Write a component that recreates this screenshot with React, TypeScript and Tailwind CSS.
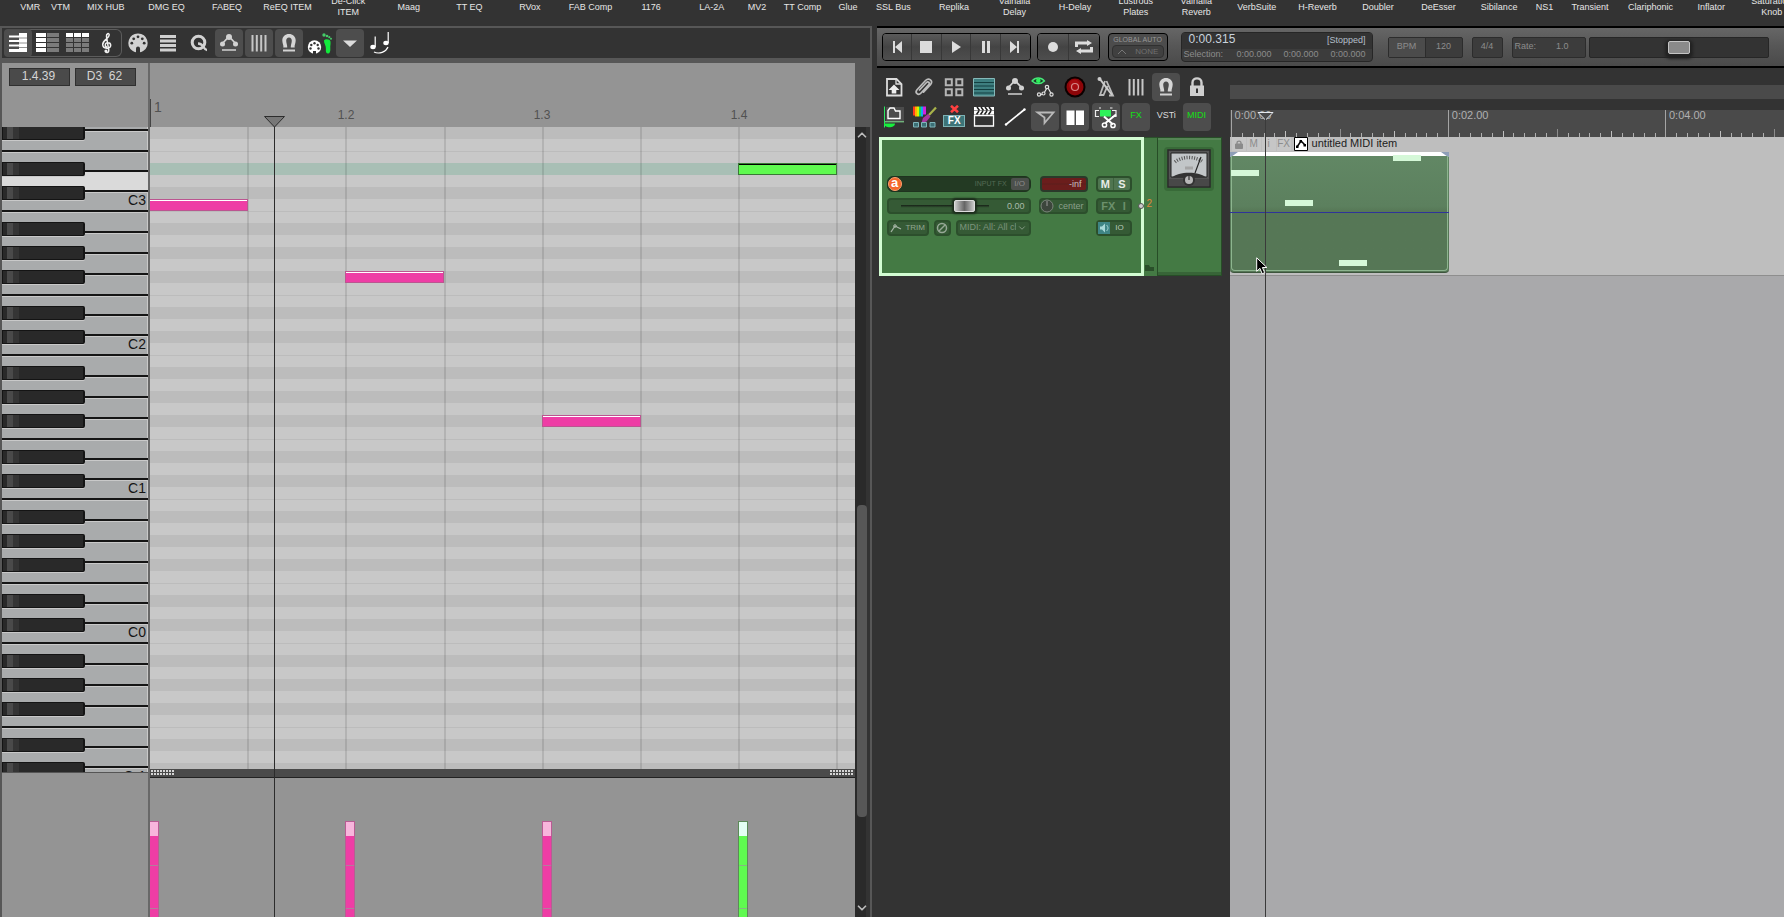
import * as React from "react";
import { ChevronDown, ChevronUp } from "lucide-react";
import clsx from "clsx";

const BEAT = 196.4;
const SECOND = 108.6;

const fxShortcuts = [
  { name: "VMR", small: true },
  { name: "VTM", small: true },
  { name: "MIX HUB" },
  { name: "DMG EQ" },
  { name: "FABEQ" },
  { name: "ReEQ ITEM" },
  { name: "De-Click ITEM" },
  { name: "Maag" },
  { name: "TT EQ" },
  { name: "RVox" },
  { name: "FAB Comp" },
  { name: "1176" },
  { name: "LA-2A" },
  { name: "MV2", small: true },
  { name: "TT Comp" },
  { name: "Glue", small: true },
  { name: "SSL Bus" },
  { name: "Replika" },
  { name: "Valhalla Delay" },
  { name: "H-Delay" },
  { name: "Lustrous Plates" },
  { name: "Valhalla Reverb" },
  { name: "VerbSuite" },
  { name: "H-Reverb" },
  { name: "Doubler" },
  { name: "DeEsser" },
  { name: "Sibilance" },
  { name: "NS1", small: true },
  { name: "Transient" },
  { name: "Clariphonic" },
  { name: "Inflator" },
  { name: "Saturation Knob" },
];

const octaves = [3, 2, 1, 0, -1];
const whiteKeys = ["B", "A", "G", "F", "E", "D", "C"];
// semitone rows counted down from B
const blackRows = [1, 3, 5, 8, 10];
const semitones = [0, 1, 2, 3, 4, 5, 6, 7, 8, 9, 10, 11];

// row is counted from the top of octave 3
const notes = [
  { beat: 0, row: 11, selected: false },
  { beat: 1, row: 17, selected: false },
  { beat: 2, row: 29, selected: false },
  { beat: 3, row: 8, selected: true },
];

/* ---------- icons ---------- */

const Svg = ({
  children,
  size = 28,
}: {
  children: React.ReactNode;
  size?: number;
}) => (
  <svg
    width={size}
    height={size}
    viewBox="0 0 28 28"
    fill="none"
    className="shrink-0"
  >
    {children}
  </svg>
);

const PianoIcon = () => (
  <Svg>
    <path
      d="M15 4h8v19H15zM5 6.500h10v2H5zM5 11h10v2H5zM5 15.500h10v2H5zM5 20h10v3H5z"
      fill="#fff"
    />
    <path d="M15 9h8M15 14h8M15 18.500h8" stroke="#777" strokeWidth=".8" />
  </Svg>
);

const NamedNotesIcon = () => (
  <Svg>
    <path d="M2 4h10v4H2zM2 9h10v4H2zM2 14h10v4H2zM2 19h10v4H2z" fill="#fff" />
    <path
      d="M13 4h12v4H13zM13 9h12v4H13zM13 14h12v4H13zM13 19h12v4H13z"
      fill="#7b7b7b"
    />
  </Svg>
);

const EventListIcon = () => (
  <Svg>
    {[2, 10, 18].map((x) => (
      <g key={x}>
        <path d={`M${x} 4h7v4h-7z`} fill="#fff" />
        <path d={`M${x} 9h7v4h-7zM${x} 14h7v4h-7zM${x} 19h7v4h-7z`} fill="#7b7b7b" />
      </g>
    ))}
  </Svg>
);

const ClefIcon = () => (
  <Svg>
    <path
      d="M11.500 21.500c-.8 2.800 4 2.600 3.200-.5L12.500 7.500c-.4-3 2.700-4 2.700-1.500 0 3.500-6.500 5-6.500 9.500 0 4.600 8 4.900 8 .8 0-3.600-5.600-3.400-5.400-.2 0 1.500 1 2 1.800 2"
      stroke="#f0f0f0"
      strokeWidth="1.500"
    />
    <circle cx="12" cy="22" r="1.500" fill="#f0f0f0" />
  </Svg>
);

const DinIcon = () => (
  <Svg>
    <path
      d="M14 4.500a9.500 9.500 0 0 1 5.500 17.300c-1.200 1-2 1.200-3.500 1.500v-3.800a2 2 0 0 0-4 0v3.800c-1.500-.3-2.300-.5-3.500-1.500A9.500 9.500 0 0 1 14 4.500z"
      fill="#d2d2d2"
    />
    <g fill="#333">
      <circle cx="14" cy="7.800" r="1.400" />
      <circle cx="9.700" cy="9.800" r="1.400" />
      <circle cx="18.300" cy="9.800" r="1.400" />
      <circle cx="7.800" cy="14.200" r="1.400" />
      <circle cx="20.200" cy="14.200" r="1.400" />
    </g>
  </Svg>
);

const RowsIcon = () => (
  <Svg>
    <path d="M6 6h16v3H6zM6 10.500h16v3H6zM6 15h16v3H6zM6 19.500h16v3H6z" fill="#d0d0d0" />
  </Svg>
);

const QuantizeIcon = () => (
  <Svg>
    <circle cx="13.500" cy="13.500" r="6.300" stroke="#d2d2d2" strokeWidth="3" />
    <path d="M13 14.500c3 0 4 1 5.500 3.500s2 3 3.500 3" stroke="#d2d2d2" strokeWidth="2.400" />
  </Svg>
);

const EnvelopeIcon = () => (
  <Svg>
    <path d="M6 16L14 7.500l8 8.500" stroke="#d2d2d2" strokeWidth="1.800" />
    <circle cx="14" cy="8" r="3" fill="#d2d2d2" />
    <circle cx="7.500" cy="15" r="2.500" fill="#d2d2d2" />
    <circle cx="20.500" cy="15" r="2.500" fill="#d2d2d2" />
    <path d="M7 21h14" stroke="#d2d2d2" strokeWidth="1.500" />
  </Svg>
);

const GridIcon = () => (
  <Svg>
    <path
      d="M7.500 6v16.500M11.800 6v16.500M16.200 6v16.500M20.500 6v16.500"
      stroke="#c6c6c6"
      strokeWidth="2"
    />
  </Svg>
);

const MagnetIcon = () => (
  <Svg>
    <path
      d="M12.200 18.500H8.300c.6-2-1-4-1-7C7.300 7.500 10.300 5 14 5s6.700 2.500 6.700 6.500c0 3-1.600 5-1 7h-3.900c-.3-2 1-4.200 1-6.700 0-2-1-3.300-2.800-3.300s-2.800 1.300-2.800 3.300c0 2.500 1.300 4.700 1 6.700z"
      fill="#d6d6d6"
    />
    <path d="M8 21.500h12" stroke="#d2d2d2" strokeWidth="2" />
  </Svg>
);

const StepInputIcon = () => (
  <Svg>
    <circle cx="8.500" cy="18" r="6.700" fill="#fff" />
    <path d="M7 26v-4h3v4z" fill="#333" />
    <g fill="#333">
      <circle cx="8.500" cy="14.300" r="1.200" />
      <circle cx="5.300" cy="16" r="1.200" />
      <circle cx="11.700" cy="16" r="1.200" />
      <circle cx="4.500" cy="19.500" r="1.200" />
      <circle cx="12.500" cy="19.500" r="1.200" />
    </g>
    <path
      d="M18 11.500c1-1.800 6-1.800 6.500 1 .3 3-.4 4-.2 6.500.3 3.500-.5 5.500-2.200 5.500-2 0-2.500-2-2.200-4.500.4-3-2.200-6-1.900-8.500z"
      fill="#12ea3c"
    />
    <g fill="#45c968">
      <circle cx="18" cy="6" r="1.700" />
      <circle cx="21" cy="7" r="1.300" />
      <circle cx="23.300" cy="8.200" r="1.100" />
      <circle cx="25" cy="9.800" r="1" />
    </g>
  </Svg>
);

const DropIcon = () => (
  <Svg>
    <path d="M7 11.500h14L14 18z" fill="#dcdcdc" />
  </Svg>
);

const NotesIcon = () => (
  <Svg>
    <ellipse cx="7" cy="18" rx="2.700" ry="2.200" fill="#fff" />
    <ellipse cx="20" cy="14" rx="2.700" ry="2.200" fill="#fff" />
    <path
      d="M9.200 18V7.500M22.200 14V3M8 23c5 2.500 12 0 14-5"
      stroke="#fff"
      strokeWidth="1.200"
    />
  </Svg>
);

const SaveIcon = () => (
  <Svg>
    <path d="M7 6h9.500l5 5v11.500H7z" stroke="#ddd" strokeWidth="1.800" />
    <path d="M16 6v5h5" stroke="#ddd" strokeWidth="1.300" />
    <path d="M14 11.500l5.500 5.500h-3.200v3.500h-4.600V17H8.500z" fill="#eee" />
  </Svg>
);

const ClipIcon = () => (
  <Svg>
    <path
      d="M9.500 17l7-7.500c1.500-1.600 3.800.3 2.300 2L11 20c-2.800 3-6.500-.3-4-3.300L15.500 7.500c3.500-3.500 8 .5 5 4.200l-7 7.500"
      stroke="#bdbdbd"
      strokeWidth="1.700"
      strokeLinecap="round"
    />
  </Svg>
);

const BlocksIcon = () => (
  <Svg>
    <path
      d="M5.800 6.300h6v6h-6zM16.300 6.300h6v6h-6zM5.800 16.300h6v6h-6zM16.300 16.300h6v6h-6z"
      stroke="#b5b5b5"
      strokeWidth="2"
    />
  </Svg>
);

const RippleIcon = () => (
  <Svg>
    <path d="M3.500 5.500h21v17.500h-21z" fill="#3e7f80" stroke="#85b9b9" />
    <path d="M4 9.500h20M4 13h20M4 16.500h20M4 20h20" stroke="#133f40" strokeWidth="1.200" />
  </Svg>
);

const EnvViewIcon = () => (
  <Svg>
    <path
      d="M1 8C4.500 4 10 4 13.500 8c-3.500 3.500-9 3.500-12.500 0z"
      fill="#1c3a26"
      stroke="#46e878"
      strokeWidth="1.300"
    />
    <circle cx="7.300" cy="7.800" r="2.300" fill="#2cf25a" />
    <path d="M8.500 22l4-1 4-7 4.500 8" stroke="#ddd" strokeWidth="1.300" />
    <g fill="#333" stroke="#ddd" strokeWidth="1.200">
      <circle cx="8" cy="21.500" r="1.600" />
      <circle cx="12.500" cy="20.500" r="1.500" />
      <circle cx="16" cy="14" r="1.700" />
      <circle cx="20.500" cy="21.500" r="1.600" />
    </g>
  </Svg>
);

const RecordIcon = () => (
  <Svg>
    <circle cx="14" cy="14" r="10.500" fill="#0c0000" />
    <circle cx="14" cy="14" r="8.500" fill="#8d0508" />
    <circle cx="13.500" cy="12" r="5.500" fill="#a80b10" />
    <circle cx="14" cy="14" r="3.500" stroke="#d58888" strokeWidth="1.200" />
  </Svg>
);

const MetronomeIcon = () => (
  <Svg>
    <path d="M13 8l-5 14h3.500l4-9M14.500 8l6.500 14.500h-4" stroke="#bbb" strokeWidth="1.800" />
    <path d="M7.500 5.500L20 22" stroke="#ccc" strokeWidth="2" />
    <circle cx="7.500" cy="6" r="2" fill="#ccc" />
  </Svg>
);

const LockIcon = () => (
  <Svg>
    <path d="M9.500 13V9.500c0-5.500 9-5.500 9 0V13" stroke="#cfcfcf" strokeWidth="2.400" />
    <path d="M7 12.500h14v10.500H7z" fill="#cfcfcf" />
    <path d="M13 15.500h2v4.500h-2z" fill="#333" />
  </Svg>
);

const FolderIcon = () => (
  <Svg>
    <path d="M4.500 4.500v21" stroke="#2be860" strokeWidth="1" />
    <path d="M6 5h18v14H6z" fill="#4c4c4c" />
    <path d="M5 19.800h19" stroke="#8be89b" />
    <path d="M4 21.500h11c0 5-11 5-11 0z" fill="#17ef3d" />
    <path
      d="M8 16.500v-8l2-2.500h4l1.500 3h4.500v7.500z"
      stroke="#fff"
      strokeWidth="1.400"
    />
  </Svg>
);

const PaintIcon = () => (
  <Svg>
    <path d="M3 4.500h2v9H3z" fill="#ff3b1f" />
    <path d="M5 4.500h2v10H5z" fill="#ffb000" />
    <path d="M7 4.500h2v10H7z" fill="#d7f000" />
    <path d="M9 4.500h2v10H9z" fill="#12d65a" />
    <path d="M11 4.500h2v10h-2z" fill="#16a8ef" />
    <path d="M13 4.500h3v8h-3z" fill="#d022e0" />
    <path d="M26 5.500L19 13" stroke="#a8b34a" strokeWidth="2.200" />
    <path d="M18 12l2.500 2.500-4 5-5 1.500 1.500-5z" fill="#a8379f" />
    <path
      d="M3.500 20.500h5v4.500h-5zM11.500 20.500h5v4.500h-5zM20 20.500h5v4.500h-5z"
      fill="#3b6f75"
      stroke="#7fb5ba"
    />
  </Svg>
);

const FxOfflineIcon = () => (
  <span className="flex flex-col items-center gap-0.5">
    <svg width="9" height="8" viewBox="0 0 9 8">
      <path d="M1 .8L8 7.200M8 .8L1 7.200" stroke="#ff4040" strokeWidth="2.600" />
    </svg>
    <span className="w-[22px] h-[12px] bg-[#3d7478] border border-[#7db3b5] text-white text-[10px] leading-[10px] font-bold text-center">
      FX
    </span>
  </span>
);

const ClapIcon = () => (
  <Svg>
    <path d="M4.500 13.500h19V24h-19z" stroke="#fff" strokeWidth="1.300" />
    <path d="M4 5h20v3.500H4zM4 9h20v3.500H4z" fill="#fff" />
    <path
      d="M7 5l2.500 3.500M11 5l2.500 3.500M15 5l2.500 3.500M19 5l2.500 3.500M9 9l-2.500 3.500M13 9l-2.500 3.500M17 9l-2.500 3.500M21 9l-2.500 3.500"
      stroke="#222"
      strokeWidth="1.500"
    />
  </Svg>
);

const LineIcon = () => (
  <Svg>
    <path d="M5 22.500L23.500 7.500" stroke="#fff" strokeWidth="1.700" />
    <circle cx="5" cy="22.500" r="1.200" fill="#fff" />
    <circle cx="23.500" cy="7.500" r="1.200" fill="#fff" />
  </Svg>
);

const ArrowIcon = () => (
  <Svg>
    <path d="M6.500 10.500h16L13.500 21v-5.500z" stroke="#b9b9b9" strokeWidth="1.800" />
  </Svg>
);

const ItemsIcon = () => (
  <Svg>
    <path d="M5.500 8.500h8V23h-8zM15 8.500h8V23h-8z" fill="#fff" />
  </Svg>
);

const SplitIcon = () => (
  <Svg>
    <path d="M8 8h11v6.500H8z" fill="#2ef25a" />
    <path
      d="M7 8.500H3.500v6H7M20 8.500h4v6h-4M7 6h2M18 6h2.500"
      stroke="#eee"
      strokeWidth="1.200"
    />
    <path d="M24 12.500L13.500 21M12 14.500l9 8" stroke="#fff" strokeWidth="2" />
    <circle cx="12.500" cy="23" r="2.100" stroke="#fff" strokeWidth="1.500" />
    <circle cx="21" cy="23.500" r="2.100" stroke="#fff" strokeWidth="1.500" />
  </Svg>
);

/* ---------- shared pieces ---------- */

interface ToolButtonProps {
  label: string;
  active?: boolean;
  children: React.ReactNode;
}

const ToolButton = ({ label, active, children }: ToolButtonProps) => (
  <button
    type="button"
    aria-label={label}
    className={clsx(
      "w-7 h-7 shrink-0 flex items-center justify-center rounded-sm",
      active && "bg-[#4d4d4d]",
    )}
  >
    {children}
  </button>
);

const Grip = () => (
  <svg width="24" height="6" className="mx-px">
    {[0, 1, 2, 3, 4, 5, 6, 7].map((i) => (
      <path key={i} d={`M${i * 3} 0h2v2h-2zM${i * 3} 3h2v2h-2z`} fill="#d5d5d5" />
    ))}
  </svg>
);

/* ---------- plugin shortcuts ---------- */

const ShortcutBar = () => (
  <nav className="h-[26px] shrink-0 flex items-start ml-[15px] -mr-[18px] text-[#e6e6e6] text-[9px] leading-[11px]">
    {fxShortcuts.map((fx) => (
      <button
        key={fx.name}
        type="button"
        className={clsx(
          "h-[14px] min-w-0 flex items-center justify-center",
          fx.small ? "flex-1" : "flex-2",
        )}
      >
        <span
          className={clsx(
            "text-center",
            /De-Click|Valhalla|Lustrous|Saturation/.test(fx.name)
              ? "w-11"
              : "whitespace-nowrap",
          )}
        >
          {fx.name}
        </span>
      </button>
    ))}
  </nav>
);

/* ---------- MIDI editor ---------- */

const MidiToolbar = () => (
  <div className="h-[30px] shrink-0 bg-[#333] flex items-center pl-0.5">
    <div className="flex gap-0.5 rounded-md ring-1 ring-inset ring-[#5c5c5c]">
      <ToolButton label="Piano roll" active>
        <PianoIcon />
      </ToolButton>
      <ToolButton label="Named notes">
        <NamedNotesIcon />
      </ToolButton>
      <ToolButton label="Event list">
        <EventListIcon />
      </ToolButton>
      <ToolButton label="Notation">
        <ClefIcon />
      </ToolButton>
    </div>
    <div className="ml-0.5 w-[270px] flex justify-between">
      <ToolButton label="MIDI filter">
        <DinIcon />
      </ToolButton>
      <ToolButton label="Event rows">
        <RowsIcon />
      </ToolButton>
      <ToolButton label="Quantize">
        <QuantizeIcon />
      </ToolButton>
      <ToolButton label="Envelope" active>
        <EnvelopeIcon />
      </ToolButton>
      <ToolButton label="Grid" active>
        <GridIcon />
      </ToolButton>
      <ToolButton label="Snap" active>
        <MagnetIcon />
      </ToolButton>
      <ToolButton label="Step input">
        <StepInputIcon />
      </ToolButton>
      <ToolButton label="More" active>
        <DropIcon />
      </ToolButton>
      <ToolButton label="Note length">
        <NotesIcon />
      </ToolButton>
    </div>
  </div>
);

const Keyboard = () => (
  <div className="flex-1 min-h-0 overflow-hidden bg-[#a9abac]">
    <div className="-mt-[59px]">
      {octaves.map((oct) => (
        <div key={oct} className="relative">
          {whiteKeys.map((key, i) => (
            <div
              key={key}
              className={clsx(
                "border-b-2 border-[#151515] flex items-center justify-end pr-0.5 pb-0.5 text-sm leading-4 text-[#151515]",
                i < 4 ? "h-[21px]" : "h-5",
                oct === 3 && key === "D"
                  ? "bg-[#dadada]"
                  : "bg-[#a9abac] shadow-[inset_-1px_1px_0_#c9c9c9]",
              )}
            >
              {key === "C" && `C${oct}`}
            </div>
          ))}
          {blackRows.map((row) => (
            <div
              key={row}
              className="absolute left-0 w-[83px] h-[14px] border border-[#141414] border-r-2 rounded-r-xs bg-[#292929] shadow-[0_1px_0_#c9c9c9]"
              style={{ top: row * 12 - 2 }}
            >
              <div className="ml-1 h-full w-3 bg-linear-to-r from-[#4a4a4a] from-50% to-[#353535] to-50%" />
            </div>
          ))}
        </div>
      ))}
    </div>
  </div>
);

const Ruler = () => (
  <div className="relative h-16 shrink-0 bg-[#949494] text-[#515151]">
    <div className="absolute left-0 bottom-0 h-7 w-px bg-[#444]" />
    <span className="absolute left-1 top-9 text-sm leading-4">1</span>
    {[1, 2, 3].map((b) => (
      <span
        key={b}
        className="absolute top-11 text-xs leading-4 -translate-x-1/2"
        style={{ left: Math.floor(b * BEAT) }}
      >
        1.{b + 1}
      </span>
    ))}
  </div>
);

const PianoRoll = () => (
  <div className="relative flex-1 min-h-0 overflow-hidden bg-[#c8c8c8]">
    <div className="relative -mt-[60px]">
      {octaves.map((oct) =>
        semitones.map((s) => (
          <div
            key={`${oct}-${s}`}
            className={clsx(
              "h-3",
              oct === 3 && s === 8
                ? "bg-[#a8bfb5]"
                : blackRows.includes(s)
                  ? "bg-[#bcbcbc]"
                  : "bg-[#c8c8c8]",
              (s === 0 || s === 7) && "border-t border-[#bcbcbc]",
            )}
          />
        )),
      )}
      {[1, 2, 3, 4, 5, 6, 7].map((i) => (
        <div
          key={i}
          className="absolute inset-y-0 w-0.5 bg-black/10"
          style={{ left: Math.round((i * BEAT) / 2) - 1 }}
        />
      ))}
      {notes.map((n) => (
        <div
          key={n.beat}
          className={clsx(
            "absolute h-3 border",
            n.selected
              ? "bg-[#5ffa50] border-[#3a7a36] shadow-[inset_0_1px_0_#000]"
              : "bg-[#ee3da5] border-[#bb5590] shadow-[inset_0_1px_0_#fff]",
          )}
          style={{
            left: Math.round(n.beat * BEAT) - 1,
            top: n.row * 12,
            width: Math.round(BEAT / 2) + 1,
          }}
        />
      ))}
    </div>
  </div>
);

const VelocityLane = () => (
  <div className="relative h-[139px] shrink-0 overflow-hidden bg-[#949494]">
    {notes.map((n) => (
      <div
        key={n.beat}
        className={clsx(
          "absolute bottom-0 w-[10px] h-24 border border-b-0",
          n.selected ? "bg-[#5ffa50] border-[#5c8a58]" : "bg-[#ee3da5] border-[#b85c93]",
        )}
        style={{ left: Math.round(n.beat * BEAT) - 1 }}
      >
        <div className={clsx("h-[14px]", n.selected ? "bg-[#e4fff4]" : "bg-[#f8b5dc]")} />
        <div className="mt-[29px] h-px bg-[#999]/70" />
        <div className="mt-[42px] h-px bg-[#999]/70" />
      </div>
    ))}
  </div>
);

const MidiEditor = () => (
  <section className="flex-[872] min-w-0 flex flex-col bg-[#575757] pt-0.5 px-0.5">
    <MidiToolbar />
    <div className="mt-[5px] flex-1 min-h-0 flex">
      <div className="w-[146px] shrink-0 flex flex-col">
        <div className="h-16 shrink-0 bg-[#949494] flex items-start gap-[5px] pt-[5px] pl-[7px] text-xs text-[#d5d5d5]">
          <div className="w-[61px] h-[18px] leading-[15px] pr-0.5 text-center bg-[#4a4a4a] border border-[#2f2f2f]">
            1.4.39
          </div>
          <div className="w-[61px] h-[18px] leading-[15px] pr-0.5 text-center whitespace-pre bg-[#4a4a4a] border border-[#2f2f2f]">
            {"D3  62"}
          </div>
        </div>
        <Keyboard />
        <div className="h-[145px] shrink-0 bg-[#949494] border-t border-[#555]" />
      </div>

      <div className="relative flex-1 min-w-0 overflow-hidden flex flex-col border-l-2 border-[#686868]">
        <Ruler />
        <PianoRoll />
        <div className="h-[9px] shrink-0 bg-[#4a4a4a] border-b border-[#222] flex items-center justify-between">
          <Grip />
          <Grip />
        </div>
        <VelocityLane />
        {/* edit cursor */}
        <div className="absolute left-[124px] top-16 bottom-0 w-px bg-[#2c2c2c]" />
        <svg width="22" height="12" className="absolute left-[114px] top-[53px]">
          <path d="M.5 .5h20L10.500 11z" fill="#777" stroke="#2c2c2c" />
        </svg>
      </div>

      <div className="w-[15px] shrink-0 mt-16 bg-[#2a2a2a] border-r-4 border-[#333] flex flex-col items-center text-[#bbb]">
        <ChevronUp size={14} strokeWidth={3} className="shrink-0 mt-px -mr-1" />
        <div className="flex-[362]" />
        <div className="flex-[310] w-[10px] -mr-1 rounded-sm bg-[#575757]" />
        <div className="flex-[84]" />
        <ChevronDown size={14} strokeWidth={3} className="shrink-0 mb-0.5 -mr-1" />
      </div>
    </div>
  </section>
);

/* ---------- transport ---------- */

const TransportButton = ({
  label,
  children,
}: {
  label: string;
  children: React.ReactNode;
}) => (
  <button
    type="button"
    aria-label={label}
    className="flex-1 flex items-center justify-center bg-linear-to-b from-[#5a5a5a] via-[#444] to-[#4e4e4e] border-r border-[#383838] last:border-r-0"
  >
    <svg width="18" height="14" viewBox="0 0 18 14" fill="#dcdcdc">
      {children}
    </svg>
  </button>
);

const Transport = () => (
  <div className="h-[42px] shrink-0 overflow-hidden border-y-2 border-black bg-linear-to-b from-[#666] via-[#565656] to-[#4a4a4a] flex items-center pl-[5px] text-[9px] text-[#8c8c8c]">
    <div className="w-[149px] h-7 shrink-0 flex rounded-sm overflow-hidden border border-black">
      <TransportButton label="Go to start">
        <path d="M5 1h2v12H5zM14 1v12L7 7z" />
      </TransportButton>
      <TransportButton label="Stop">
        <path d="M3 1h12v12H3z" />
      </TransportButton>
      <TransportButton label="Play">
        <path d="M5 1l9 6-9 6z" />
      </TransportButton>
      <TransportButton label="Pause">
        <path d="M5 1h3v12H5zM10 1h3v12h-3z" />
      </TransportButton>
      <TransportButton label="Go to end">
        <path d="M11 1h2v12h-2zM4 1v12l7-6z" />
      </TransportButton>
    </div>
    <div className="ml-1.5 w-[63px] h-7 shrink-0 flex rounded-sm overflow-hidden border border-black">
      <TransportButton label="Record">
        <circle cx="9" cy="7" r="5" />
      </TransportButton>
      <TransportButton label="Repeat">
        <path d="M0 1.500h12V0l5 3-5 3V4.500H3V7H0zM18 12.500H6V14l-5-3 5-3v1.500h9V7h3z" />
      </TransportButton>
    </div>
    <div className="ml-2 w-[60px] h-7 shrink-0 rounded-sm border border-black bg-[#4c4c4c] text-[8px] leading-[11px] text-center">
      <div className="text-[#989898] text-[7px] whitespace-nowrap">GLOBAL AUTO</div>
      <div className="mx-[3px] h-[13px] rounded-sm border border-[#303030] bg-[#404040] flex items-center justify-around">
        <svg width="10" height="7">
          <path d="M1 6l4-4 4 4" stroke="#777" fill="none" />
        </svg>
        <span className="text-[#707070]">NONE</span>
      </div>
    </div>
    <div className="ml-[13px] w-[192px] h-[30px] shrink-0 rounded-sm border border-[#262626] bg-[#3c3c3c]">
      <div className="h-4 flex items-start justify-between pl-[7px] pr-1.5 bg-[#333]">
        <span className="text-xs leading-[13px] text-[#c9d2dc]">0:00.315</span>
        <span className="leading-[15px] text-[#b4bfca]">[Stopped]</span>
      </div>
      <div className="h-3 flex items-start gap-3 pl-0.5 leading-[10px]">
        <span className="mr-auto">Selection:</span>
        <span>0:00.000</span>
        <span>0:00.000</span>
        <span className="mr-1.5">0:00.000</span>
      </div>
    </div>
    <div className="ml-[15px] w-[75px] h-[21px] shrink-0 leading-[17px] flex rounded-xs border border-[#2c2c2c] bg-[#3c3c3c] text-center">
      <span className="flex-1 bg-[#4b4b4b] border-r border-[#2c2c2c]">BPM</span>
      <span className="flex-1">120</span>
    </div>
    <div className="ml-[9px] w-[31px] h-[21px] shrink-0 leading-[17px] rounded-xs border border-[#2c2c2c] bg-[#3c3c3c] text-center">
      4/4
    </div>
    <label
      htmlFor="rate"
      className="ml-[9px] w-[74px] h-[21px] shrink-0 leading-[17px] rounded-xs border border-[#2c2c2c] bg-[#3c3c3c] flex justify-between pl-0.5 pr-4"
    >
      <span>Rate:</span>
      <span>1.0</span>
    </label>
    <input
      id="rate"
      type="range"
      defaultValue={50}
      className="ml-[3px] mr-[15px] min-w-0 flex-1 h-[21px] appearance-none rounded-xs border border-[#262626] bg-[#333] [&::-webkit-slider-thumb]:appearance-none [&::-webkit-slider-thumb]:w-[22px] [&::-webkit-slider-thumb]:h-[13px] [&::-webkit-slider-thumb]:rounded-xs [&::-webkit-slider-thumb]:border [&::-webkit-slider-thumb]:border-[#c4c4c4] [&::-webkit-slider-thumb]:bg-[#8a8a8a] [&::-webkit-slider-thumb]:shadow-[0_2px_3px_3px_#222]"
    />
  </div>
);

/* ---------- track panel ---------- */

const MainToolbar = () => (
  <div className="ml-[3px] mt-[5px] w-[331px] flex flex-col gap-0.5 text-[9px]">
    <div className="flex justify-between">
      <ToolButton label="Save project">
        <SaveIcon />
      </ToolButton>
      <ToolButton label="Attach">
        <ClipIcon />
      </ToolButton>
      <ToolButton label="Group items">
        <BlocksIcon />
      </ToolButton>
      <ToolButton label="Ripple edit">
        <RippleIcon />
      </ToolButton>
      <ToolButton label="Move envelopes">
        <EnvelopeIcon />
      </ToolButton>
      <ToolButton label="Show envelopes">
        <EnvViewIcon />
      </ToolButton>
      <ToolButton label="Arm">
        <RecordIcon />
      </ToolButton>
      <ToolButton label="Metronome">
        <MetronomeIcon />
      </ToolButton>
      <ToolButton label="Grid lines">
        <GridIcon />
      </ToolButton>
      <ToolButton label="Snap to grid" active>
        <MagnetIcon />
      </ToolButton>
      <ToolButton label="Lock">
        <LockIcon />
      </ToolButton>
    </div>
    <div className="flex justify-between [&>button]:pb-0.5">
      <ToolButton label="Track folder">
        <FolderIcon />
      </ToolButton>
      <ToolButton label="Colors">
        <PaintIcon />
      </ToolButton>
      <ToolButton label="Remove FX">
        <FxOfflineIcon />
      </ToolButton>
      <ToolButton label="Actions">
        <ClapIcon />
      </ToolButton>
      <ToolButton label="Draw line">
        <LineIcon />
      </ToolButton>
      <ToolButton label="Pointer" active>
        <ArrowIcon />
      </ToolButton>
      <ToolButton label="Items" active>
        <ItemsIcon />
      </ToolButton>
      <ToolButton label="Split item" active>
        <SplitIcon />
      </ToolButton>
      <ToolButton label="FX" active>
        <span className="text-[#14e014]">FX</span>
      </ToolButton>
      <ToolButton label="VSTi">
        <span className="text-[#dcdcdc]">VSTi</span>
      </ToolButton>
      <ToolButton label="MIDI" active>
        <span className="text-[#14e014]">MIDI</span>
      </ToolButton>
    </div>
  </div>
);

const VuMeter = () => (
  <svg width="52" height="46" viewBox="0 0 52 46" className="mx-auto mt-2">
    <rect x="1" y="1" width="50" height="44" rx="4" fill="#386a38" />
    <path d="M5 4h42v37H5z" fill="#555" stroke="#2a2a2a" strokeWidth="1.500" />
    <path d="M6 33h40v7H6z" fill="#484848" />
    <path d="M8 7h36v24H8z" fill="#c2c6c8" stroke="#222" />
    <path d="M9 31.500C15 25 37 25 43 31.500z" fill="#333" />
    <path d="M12 16C19 10 33 10 40 16" stroke="#555" strokeWidth="3.500" strokeDasharray="1 1.500" fill="none" />
    <path d="M22 20.500h8v3h-8z" fill="#a5a5a5" />
    <path d="M38 11l-6 16" stroke="#222" strokeWidth="1.200" />
    <circle cx="26" cy="34" r="6" fill="#333" />
    <circle cx="26" cy="34" r="4" fill="#b8b8b8" />
    <path d="M26 30v4" stroke="#333" strokeWidth="1.200" />
  </svg>
);

const box = "h-4 rounded-sm border-2 border-[#2c4f2c] bg-[#355a35] flex items-center shrink-0";

const TrackPanel = () => (
  <div className="mt-1.5 ml-0.5 w-[343px] h-[139px] flex bg-[#447a44]">
    <div className="w-[265px] shrink-0 border-3 border-[#d3fdd3] pt-9 pl-[5px] pr-2 flex flex-col gap-1.5 text-[9px] leading-3">
      <div className="flex">
        <div className="w-36 h-4 shrink-0 rounded-md bg-[#233a23] border border-[#1f331f] flex items-center justify-end gap-1 pr-px text-[7px] text-[#546a54]">
          <span className="size-[14px] mr-auto rounded-full bg-[#f4662c] border border-[#ffa070] text-white text-[13px] leading-[9px] font-bold text-center">
            a
          </span>
          <span>INPUT FX</span>
          <button type="button" className="w-[18px] h-3 rounded-xs bg-[#4c504c] text-[8px] text-[#8b8b8b]">
            I/O
          </button>
        </div>
        <div className="ml-[9px] w-12 h-4 shrink-0 rounded-sm border-2 border-[#2a3a2a] bg-linear-to-b from-[#6b1d1c] from-45% via-[#3d1c1a] via-50% to-[#6b1d1c] to-55% text-[#c9c0c0] text-right pr-1">
          -inf
        </div>
        <div className="ml-2 w-9 h-4 shrink-0 rounded-sm border-2 border-[#2c4f2c] bg-[#4f7550] flex text-[11px] leading-3 font-bold text-[#e8ece8]">
          <button type="button" className="flex-1 border-r border-[#3d633d]">
            M
          </button>
          <button type="button" className="flex-1">
            S
          </button>
        </div>
      </div>

      <div className="flex text-[#a9bba9]">
        <div className={clsx(box, "w-36 justify-between pl-3 pr-1")}>
          <input
            type="range"
            aria-label="Volume"
            defaultValue={79}
            className="w-[88px] h-3 appearance-none bg-linear-to-b from-transparent from-40% via-[#151c15] via-40% to-transparent to-65% [&::-webkit-slider-thumb]:appearance-none [&::-webkit-slider-thumb]:w-[21px] [&::-webkit-slider-thumb]:h-[12px] [&::-webkit-slider-thumb]:rounded-xs [&::-webkit-slider-thumb]:border [&::-webkit-slider-thumb]:border-[#ddd] [&::-webkit-slider-thumb]:bg-linear-to-r [&::-webkit-slider-thumb]:from-[#ccc] [&::-webkit-slider-thumb]:via-[#666] [&::-webkit-slider-thumb]:to-[#ccc] [&::-webkit-slider-thumb]:shadow-[0_0_2px_2px_#1c2c1c]"
          />
          <span>0.00</span>
        </div>
        <div className={clsx(box, "ml-2 w-[49px] justify-between pr-0.5 text-[#8ba08b]")}>
          <svg width="14" height="14" className="-ml-px shrink-0">
            <circle cx="7" cy="7" r="6" fill="#3c463c" stroke="#7a857a" />
            <path d="M7 2v5" stroke="#999" />
          </svg>
          <span>center</span>
        </div>
        <div className={clsx(box, "ml-2 w-9 justify-around text-[#6c906c] text-[11px] font-bold")}>
          <span>FX</span>
          <span>I</span>
        </div>
      </div>

      <div className="flex text-[#92a692]">
        <button type="button" className={clsx(box, "w-[42px] justify-around text-[8px]")}>
          <svg width="12" height="10" fill="none" stroke="#a5b5a5">
            <path d="M1 9l4-6 6 3" strokeWidth="1.300" />
            <circle cx="5" cy="3" r="1.300" />
          </svg>
          <span>TRIM</span>
        </button>
        <button type="button" aria-label="Phase" className={clsx(box, "ml-[5px] w-[17px] justify-center")}>
          <svg width="12" height="12" fill="none" stroke="#96a896" strokeWidth="1.500" className="shrink-0">
            <circle cx="6" cy="6" r="4.500" />
            <path d="M3 9l6-6" />
          </svg>
        </button>
        <div className={clsx(box, "relative ml-[5px] w-[75px]")}>
          <select
            aria-label="Track input"
            className="w-[58px] appearance-none overflow-hidden pl-0.5 pb-0.5 leading-3 text-[#7d947d]"
          >
            <option>MIDI: All: All channels</option>
          </select>
          <ChevronDown size={10} className="absolute right-0.5 top-px pointer-events-none" />
        </div>
        <button type="button" className={clsx(box, "ml-[65px] w-9 text-[8px] text-[#b7c7b7]")}>
          <svg width="12" height="12" className="bg-[#3f8585] shrink-0">
            <path d="M2 4.500h2l3-3v9l-3-3H2z" fill="#a8d8d8" />
            <path d="M8.500 3c2 2 2 4 0 6" stroke="#a8d8d8" fill="none" />
          </svg>
          <span className="flex-1 text-center">IO</span>
        </button>
      </div>
    </div>

    <div className="relative w-[13px] shrink-0 flex flex-col justify-between pt-[60px] pb-1 pl-[3px] border-t border-[#2b522b]">
      <div className="absolute -left-[6px] top-[65px] size-[6px] rounded-full bg-[#ccc] border border-[#555]" />
      <span className="text-[10px] leading-3 text-[#e0853a]">2</span>
      <svg width="9" height="8" className="-ml-0.5">
        <path d="M0 1h4l1 2h4v4H0z" fill="#2a4f2a" />
      </svg>
    </div>
    <div className="w-[65px] shrink-0 border border-[#274d27] bg-[#447a44] shadow-[inset_0_2px_0_#558555,inset_0_-3px_0_#376437]">
      <VuMeter />
    </div>
  </div>
);

/* ---------- arrange view ---------- */

const TimeRuler = () => (
  <div className="relative h-[27px] shrink-0 overflow-hidden bg-[#4a4a4a] text-[11px] leading-[10px] text-[#b0b0b0]">
    {Array.from({ length: 60 }, (_, i) => (
      <div
        key={i}
        className={clsx(
          "absolute bottom-0 w-px",
          i % 20 === 0
            ? "h-full bg-[#a5a5a5]"
            : i % 10 === 0
              ? "h-2 bg-[#8c8c8c]"
              : i % 5 === 0
                ? "h-1.5 bg-[#c0c0c0]"
                : "h-1 bg-[#b0b0b0]",
        )}
        style={{ left: Math.round((i * SECOND) / 10) + 1 }}
      />
    ))}
    {["0:00.00", "0:02.00", "0:04.00"].map((t, i) => (
      <span key={t} className="absolute top-0" style={{ left: i * 2 * SECOND + 5 }}>
        {t}
      </span>
    ))}
    <svg width="18" height="9" className="absolute left-[27px] top-0.5" fill="#4a4a4a">
      <path d="M1 .5h15L8.500 8z" stroke="#e5e9ee" />
    </svg>
  </div>
);

const itemNotes = [
  { x: 1, y: 18 },
  { x: 55, y: 48 },
  { x: 109, y: 108 },
  { x: 163, y: 3 },
];

const itemTag = "w-[14px] h-[14px] bg-[#c6c6c6] flex items-center justify-center";

const MidiItem = () => (
  <div className="w-[219px]">
    <div className="h-[15px] flex items-start gap-px pl-0.5 text-[10px] leading-3 text-[#8c8c8c]">
      <span className={itemTag}>
        <svg width="8" height="9" fill="none" stroke="#8a8a8a">
          <path d="M2 4V3c0-2.500 4-2.500 4 0v1" strokeWidth="1.300" />
          <path d="M.5 4h7v4.500h-7z" fill="#8a8a8a" />
        </svg>
      </span>
      <span className={itemTag}>M</span>
      <span className={itemTag}>i</span>
      <span className={itemTag}>FX</span>
      <svg width="14" height="14" className="ml-0.5 shrink-0">
        <path d="M.5 .5h13v13H.5z" fill="#fff" stroke="#000" />
        <path d="M3 10l4-6 4 4" stroke="#000" strokeWidth="1.500" fill="none" />
        <path d="M2 8.500h2.500V11H2zM5.500 3H8v2.500H5.500zM9.500 7H12v2.500H9.500z" fill="#000" />
      </svg>
      <span className="ml-[3px] text-[11px] text-[#1c1c1c] whitespace-nowrap">
        untitled MIDI item
      </span>
    </div>
    <div className="relative h-[121px] rounded-b-sm overflow-hidden border-b border-[#3c553c] bg-linear-to-b from-[#628865] from-0% via-[#5c805e] via-45% to-[#567756] to-50%">
      <svg width="219" height="5" className="absolute left-0 top-0">
        <path d="M0 0h219v4H0z" fill="#fff" />
        <path d="M0 0h8L1 5H0zM219 0h-8l7 5h1z" fill="#8f9fb8" />
      </svg>
      <div className="absolute inset-x-px top-1 bottom-px rounded-b-sm border-x border-b border-[#8db58f]" />
      {itemNotes.map((n) => (
        <div
          key={n.x}
          className="absolute w-7 h-1.5 bg-[#d5f8d8]"
          style={{ left: n.x, top: n.y }}
        />
      ))}
      <div className="absolute inset-x-0 top-[60px] h-px bg-[#2f3399]" />
    </div>
  </div>
);

const ArrangeView = () => (
  <div className="relative flex-1 min-w-0 flex flex-col">
    <div className="mt-[17px] mb-[11px] h-[14px] shrink-0 bg-[#4a4a4a]" />
    <TimeRuler />
    <div className="h-[139px] shrink-0 bg-[#bebebe] border-b border-[#8e8e8e]">
      <MidiItem />
    </div>
    <div className="flex-1 bg-[#a9a9ab]" />
    {/* edit cursor */}
    <div className="absolute left-[35px] top-[50px] bottom-0 w-px bg-[#3a3a3a]" />
    <svg width="12" height="18" className="absolute left-[26px] top-[189px]">
      <path
        d="M.7 .8v13.500l3.200-3 2.300 5.400 2.500-1-2.300-5.200h4.500z"
        fill="#000"
        stroke="#fff"
        strokeWidth="1"
      />
    </svg>
  </div>
);

export default function App() {
  return (
    <div className="h-screen overflow-hidden flex flex-col bg-[#333] font-['Liberation_Sans',sans-serif]">
      <ShortcutBar />
      <div className="flex-1 min-h-0 flex">
        <MidiEditor />
        <section className="flex-[912] min-w-0 flex flex-col pl-[5px]">
          <Transport />
          <div className="flex-1 min-h-0 flex">
            <div className="w-[353px] shrink-0">
              <MainToolbar />
              <TrackPanel />
            </div>
            <ArrangeView />
          </div>
        </section>
      </div>
    </div>
  );
}
